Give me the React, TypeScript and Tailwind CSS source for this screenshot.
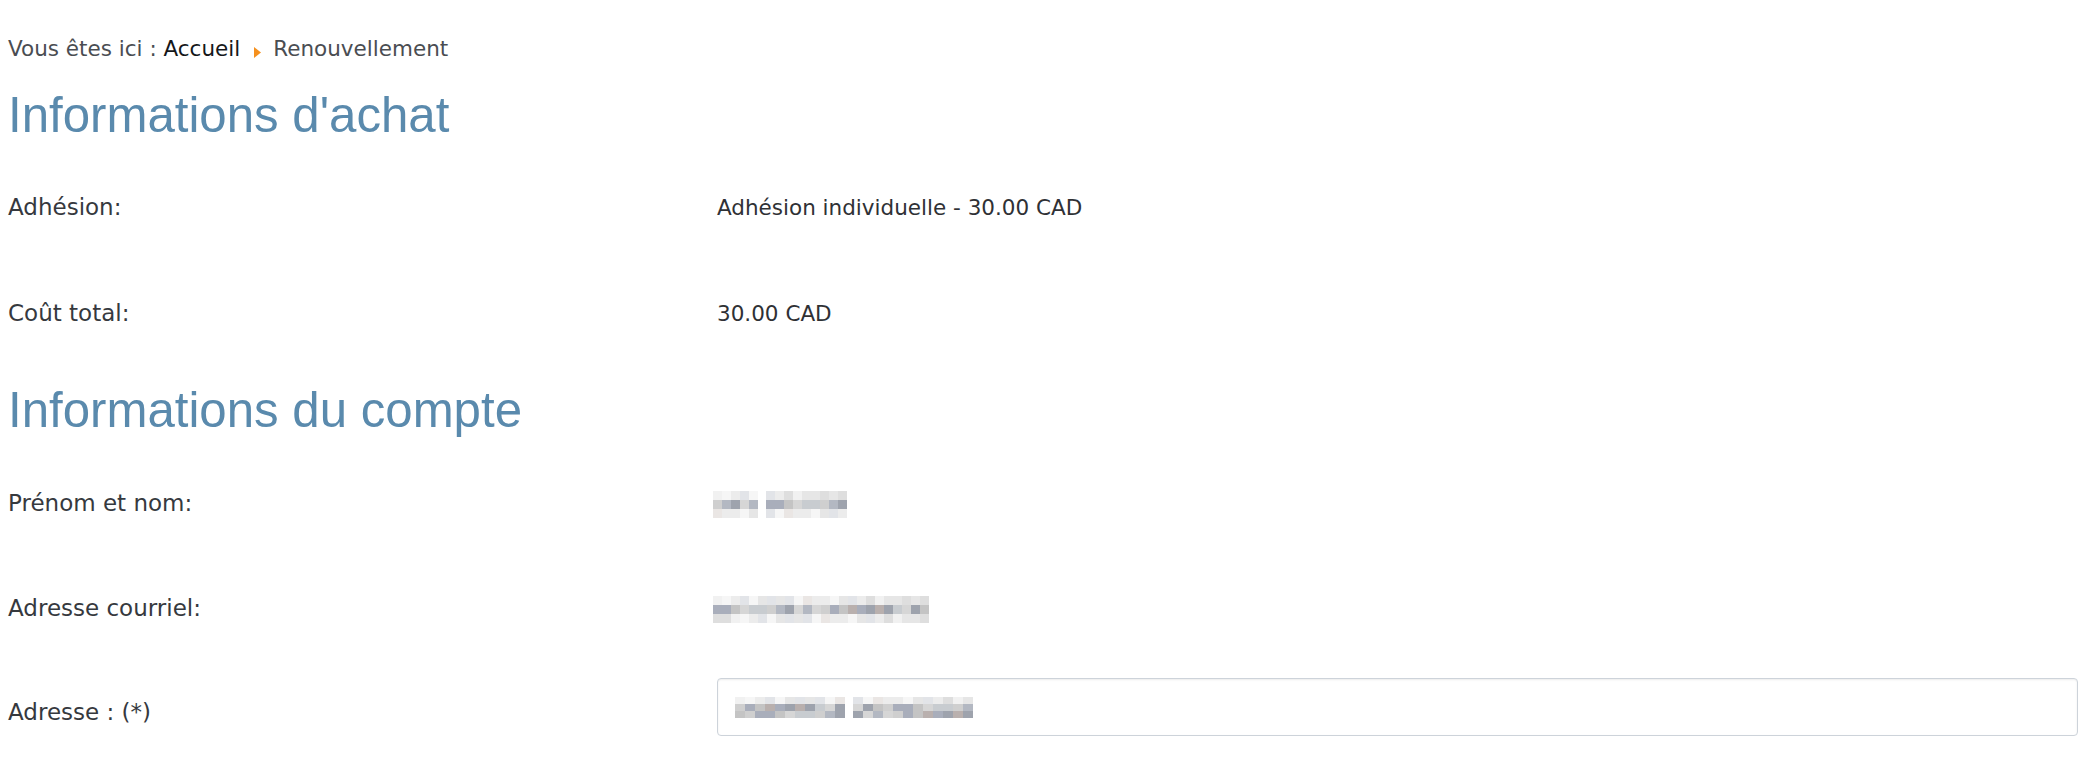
const light = [
  "bg-[#f1f1f1]",
  "bg-[#e6e6e6]",
  "bg-[#ececec]",
  "bg-[#dedede]",
  "bg-[#f6f6f6]",
  "bg-[#e2e4e8]",
  "bg-[#eae6e4]",
];
const dark = [
  "bg-[#c4c4c4]",
  "bg-[#b3b8c2]",
  "bg-[#cfcfcf]",
  "bg-[#a9aebb]",
  "bg-[#bdb6b0]",
  "bg-[#c8ccd0]",
  "bg-[#9ea3ad]",
  "bg-[#d6d6d6]",
  "bg-[#b9b0ae]",
];

// blurred-out personal data, drawn as a pixel mosaic
function Mosaic({ words, rows, cell }: { words: number[]; rows: string[]; cell: string }) {
  let seed = 3;
  const pick = (list: string[]) => {
    seed = (seed * 37 + 11) % 101;
    return list[seed % list.length];
  };
  return (
    <div className="flex gap-[8px]">
      {words.map((n, w) => (
        <div key={w} className="flex flex-col">
          {rows.map((r, i) => (
            <div key={i} className="flex">
              {Array.from({ length: n }).map((_, j) => (
                <div key={j} className={`${cell} ${pick(r === "d" ? dark : light)}`} />
              ))}
            </div>
          ))}
        </div>
      ))}
    </div>
  );
}

function Row({
  label,
  children,
  className = "",
}: {
  label: string;
  children: React.ReactNode;
  className?: string;
}) {
  return (
    <div className={`flex ${className}`}>
      <div className="w-[709px] shrink-0 text-[23px] leading-[30px] text-[#36393e]">{label}</div>
      <div className="text-[21.5px] leading-[30px] text-[#2f3135]">{children}</div>
    </div>
  );
}

export default function App() {
  return (
    <div className="min-h-screen bg-white pl-[8px] pr-[12px] pt-[34px] font-['DejaVu_Sans',sans-serif]">
      <div className="text-[21.5px] leading-[30px] text-[#4a4d52]">
        Vous êtes ici : <span className="text-[#15171a]">Accueil</span>
        <svg viewBox="0 0 7 11" className="ml-[14px] mr-[12px] inline-block h-[11px] w-[7px] align-[-2px]">
          <path d="M0 0 L7 5.5 L0 11 Z" fill="#f5901e" />
        </svg>
        Renouvellement
      </div>

      <h1 className="mt-[23px] font-['Liberation_Sans',Arial,sans-serif] text-[49.2px] leading-[56px] text-[#5a8aad]">
        Informations d'achat
      </h1>

      <Row label="Adhésion:" className="items-baseline mt-[49px]">
        Adhésion individuelle - 30.00 CAD
      </Row>
      <Row label="Coût total:" className="items-baseline mt-[75px]">
        30.00 CAD
      </Row>

      <h2 className="mt-[53px] font-['Liberation_Sans',Arial,sans-serif] text-[49.2px] leading-[56px] text-[#5a8aad]">
        Informations du compte
      </h2>

      <Row label="Prénom et nom:" className="items-center mt-[50px]">
        <div className="-ml-[4px] translate-y-[1px]">
          <Mosaic words={[5, 9]} rows={["l", "d", "l"]} cell="h-[9px] w-[9px]" />
        </div>
      </Row>
      <Row label="Adresse courriel:" className="items-center mt-[75px]">
        <div className="-ml-[4px] translate-y-[1px]">
          <Mosaic words={[24]} rows={["l", "d", "l"]} cell="h-[9px] w-[9px]" />
        </div>
      </Row>

      <div className="mt-[55px] flex items-start">
        <div className="mt-[19px] w-[709px] shrink-0 text-[23px] leading-[30px] text-[#36393e]">Adresse : (*)</div>
        <div className="flex h-[58px] flex-1 items-center rounded-[4px] border border-[#cdd3da] bg-white pl-[17px] shadow-[inset_0_1px_2px_rgba(0,0,0,0.08)]">
          <Mosaic words={[11, 12]} rows={["l", "d", "d"]} cell="h-[7px] w-[10px]" />
        </div>
      </div>
    </div>
  );
}
